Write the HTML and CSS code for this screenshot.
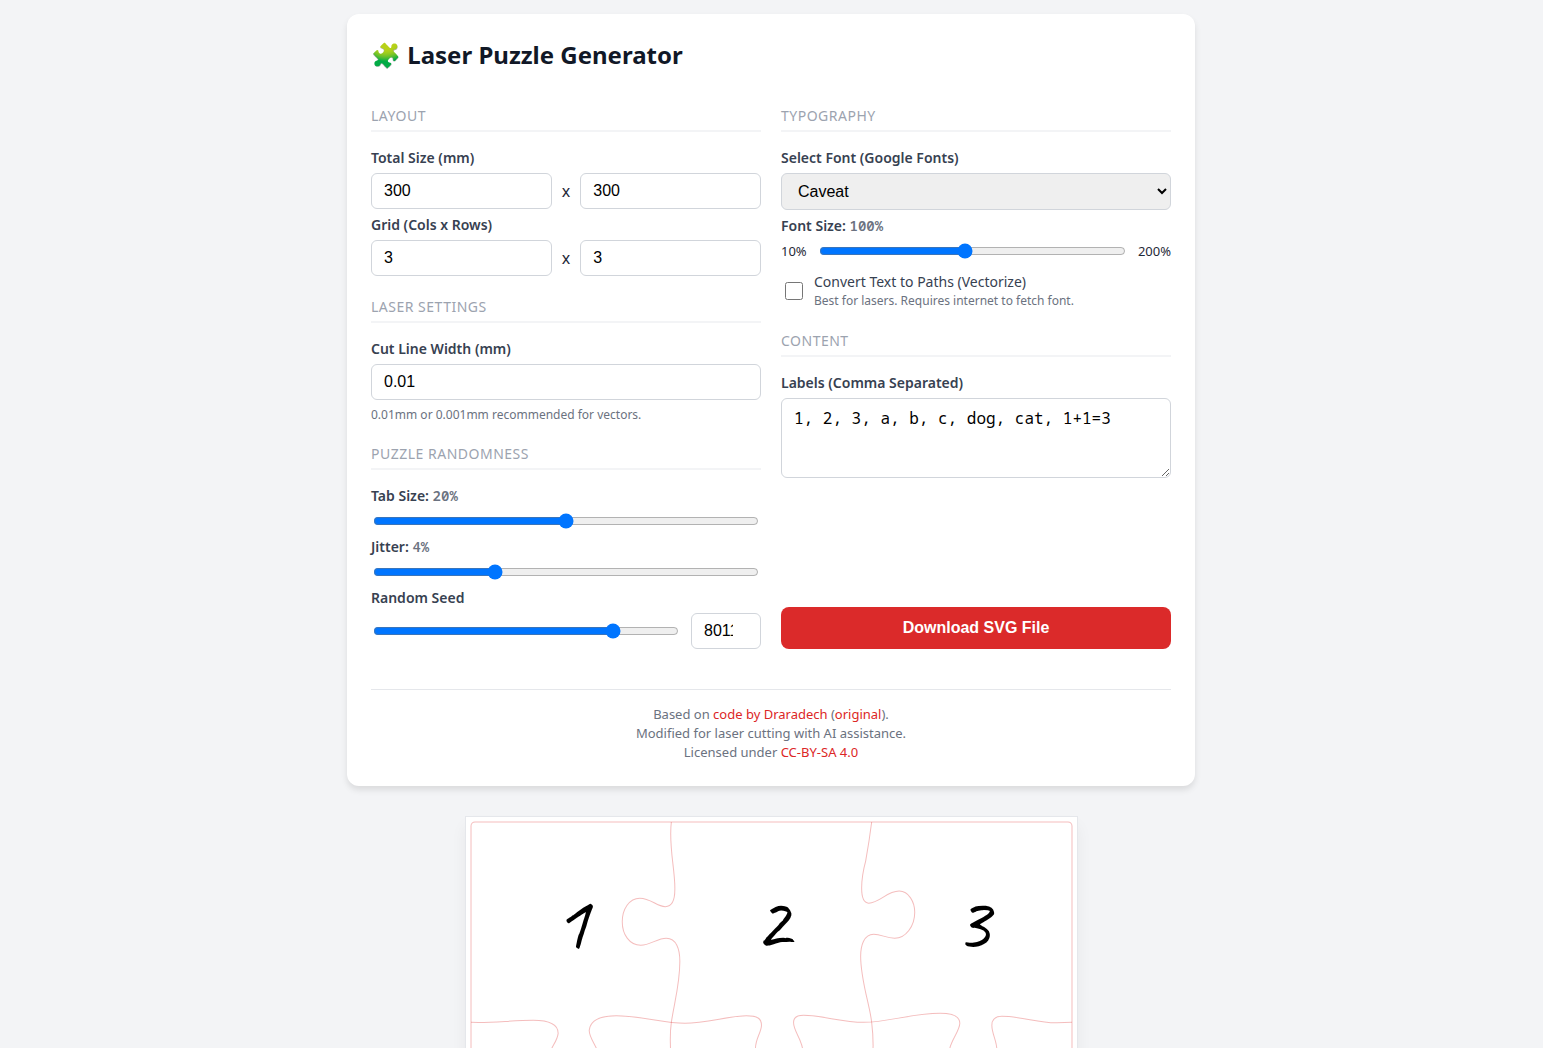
FILE: index.html
```html
<!DOCTYPE html>
<html lang="en">

<head>
  <meta charset="UTF-8" />
  <meta name="viewport" content="width=device-width, initial-scale=1.0" />
  <title>Laser Puzzle Generator</title>
  <link rel="stylesheet" href="styles.css">
</head>

<body>
  <main class="card">
    <h1>🧩 Laser Puzzle Generator</h1>

    <div class="columns">
      <div class="column">
        <section>
          <h2>Layout</h2>
          <label for="width">Total Size (mm)</label>
          <div class="row">
            <input type="number" id="width" value="300">
            <span>x</span>
            <input type="number" id="height" value="300" aria-label="Height (mm)">
          </div>
          <label for="cols">Grid (Cols x Rows)</label>
          <div class="row">
            <input type="number" id="cols" value="3">
            <span>x</span>
            <input type="number" id="rows" value="3" aria-label="Rows">
          </div>
        </section>

        <section>
          <h2>Laser Settings</h2>
          <label for="stroke">Cut Line Width (mm)</label>
          <input type="number" id="stroke" value="0.01" step="0.001">
          <p class="hint">0.01mm or 0.001mm recommended for vectors.</p>
        </section>

        <section>
          <h2>Puzzle Randomness</h2>
          <label for="tab">Tab Size: <span class="value">20%</span></label>
          <input type="range" id="tab" min="10" max="30" value="20">
          <label for="jitter">Jitter: <span class="value">4%</span></label>
          <input type="range" id="jitter" min="0" max="13" value="4">
          <label for="seed">Random Seed</label>
          <div class="row">
            <input type="range" id="seed" min="0" max="10000" value="8011">
            <input type="number" class="seed-number" value="8011" aria-label="Random seed value">
          </div>
        </section>
      </div>

      <div class="column">
        <section>
          <h2>Typography</h2>
          <label for="font">Select Font (Google Fonts)</label>
          <select id="font">
            <option>Caveat</option>
            <option>Roboto</option>
            <option>Open Sans</option>
          </select>
          <label for="fontSize">Font Size: <span class="value">100%</span></label>
          <div class="row range-row">
            <span>10%</span>
            <input type="range" id="fontSize" min="10" max="200" value="100">
            <span>200%</span>
          </div>
          <div class="check-row">
            <input type="checkbox" id="vectorize">
            <label for="vectorize">
              Convert Text to Paths (Vectorize)
              <small>Best for lasers. Requires internet to fetch font.</small>
            </label>
          </div>
        </section>

        <section>
          <h2>Content</h2>
          <label for="labels">Labels (Comma Separated)</label>
          <textarea id="labels">1, 2, 3, a, b, c, dog, cat, 1+1=3</textarea>
        </section>

        <button type="button" class="download">Download SVG File</button>
      </div>
    </div>

    <footer>
      Based on <a href="#">code by Draradech</a> (<a href="#">original</a>).<br>
      Modified for laser cutting with AI assistance.<br>
      Licensed under <a href="#">CC-BY-SA 4.0</a>
    </footer>
  </main>

  <div class="preview">
    <svg viewBox="-5 -5 610 610" role="img" aria-label="Puzzle preview">
      <g class="cuts">
        <rect x="0" y="0" width="600" height="600" rx="4" />

        <!-- vertical cuts -->
        <path d="M200 0 C197 24 204 48 203.5 67.5 C203.5 80 200 84.5 194 84.5 C185 84.5 180 76 168.5 76 C158 76 151 87 151 99.5 C151 112 158 123 169.5 123 C179 123 186 116 195 116 C205 116 208.5 127 208.5 139 C208.5 162 203 180 200 200 C198 214 199 228 200 240 C202 262 205 278 190 279 C178 278 174 272 165 276 C146 285 150 318 168 323 C180 326 185 316 196 317 C215 324 203 368 200 400 C198 430 205 470 200 482 C190 490 178 473 164 476 C148 482 148 518 166 523 C178 526 184 514 197 518 C212 528 203 568 200 600" />
        <path d="M400 0 C398 16 396 28 394 39 C391 50 390 58 390 66 C390 76 392 81 397 81 C408 81 415 69 427.5 69 C437 69 443 80 443 90 C443 104 434 116 423 116 C414 116 410 112 402 112 C392 112 389 124 389 134 C389 158 398 182 400 200 C402 216 402 230 400 246 C397 266 395 279 405 281 C417 281 422 271 434 274 C452 282 450 315 434 322 C422 326 414 315 403 317 C388 326 399 370 400 400 C402 440 394 478 404 481 C416 482 422 472 434 475 C450 483 450 516 434 522 C422 526 414 516 403 518 C388 526 398 570 400 600" />

        <!-- horizontal cuts -->
        <path d="M0 200 C20 201 40 198 62 198 C79 198 87 202 87 211 C86 220 79 225 78 234 C76 260 126 262 128 238 C129 226 118 218 118 208 C119 199 128 193.500 145 193.500 C170 193.500 192 201 213.500 201 C235 201 258 193.500 275 193.500 C286 193.500 290 196 290 203 C290 210 284 216 284 226 C284 258 333 258 332 232 C331 216 322 210 322 200 C322 195 325 193 332 193 C351 193 370 200 392 200 C416 200 440 191 468.500 191 C483 191 488 195 488 201 C488 208 480 217 478 226 C474 256 526 258 525 228 C525 218 520 212 520 203 C520 197 524 194 530 194 C550 194 567 201 585 200.500 L600 200" />
        <path d="M0 400 C40 402 82 388 86 404 C86 416 76 422 77 436 C82 458 122 456 125 434 C124 420 112 414 117 403 C130 390 170 400 200 400 C240 402 284 388 288 404 C287 416 278 422 278 436 C284 458 324 456 326 434 C325 420 314 414 319 403 C330 390 370 400 400 400 C440 402 484 388 487 404 C487 416 477 422 478 436 C484 458 524 456 526 434 C525 420 514 414 519 403 C530 390 570 400 600 400" />
      </g>
      <g class="piece-labels">
        <text x="100" y="126">1</text>
        <text x="300" y="126">2</text>
        <text x="500" y="126">3</text>
        <text x="100" y="326">a</text>
        <text x="300" y="326">b</text>
        <text x="500" y="326">c</text>
        <text x="100" y="526">dog</text>
        <text x="300" y="526">cat</text>
        <text x="500" y="526">1+1=3</text>
      </g>
    </svg>
  </div>
</body>

</html>
```
FILE: styles.css
```css
:root {
  --bg: #f3f4f6;
  --text: #1f2937;
  --label: #374151;
  --muted: #6b7280;
  --heading: #9ca3af;
  --border: #d1d5db;
  --accent: #dc2626;
}

* {
  box-sizing: border-box;
}

body {
  font-family: "Noto Sans", sans-serif;
  background: var(--bg);
  color: var(--text);
  margin: 0;
  padding: 14px 15px 14px 14px;
  display: flex;
  flex-direction: column;
  align-items: center;
  gap: 30px;
}

.card {
  width: 100%;
  max-width: 848px;
  background: #fff;
  padding: 24px;
  border-radius: 12px;
  box-shadow: 0 4px 6px rgba(0, 0, 0, 0.1);
}

h1 {
  margin: 0 0 35px;
  font-size: 24px;
  line-height: 33px;
  color: #111827;
}

.columns {
  display: grid;
  grid-template-columns: 1fr 1fr;
  gap: 20px;
}

.column {
  display: flex;
  flex-direction: column;
  gap: 21px;
}

h2 {
  margin: 0 0 16px;
  padding-bottom: 5px;
  border-bottom: 2px solid var(--bg);
  font-size: 14px;
  font-weight: 400;
  line-height: 19px;
  letter-spacing: 0.5px;
  text-transform: uppercase;
  color: var(--heading);
}

label {
  display: block;
  margin: 6px 0 5px;
  font-size: 14px;
  font-weight: 600;
  line-height: 20px;
  color: var(--label);
}

.value {
  font-family: "Noto Sans Mono", monospace;
  color: var(--muted);
}

input[type="number"],
select,
textarea {
  display: block;
  width: 100%;
  min-width: 0;
  padding: 8px 12px;
  border: 1px solid var(--border);
  border-radius: 6px;
  font-family: "Liberation Sans", sans-serif;
  font-size: 16px;
}

input[type="number"] {
  height: 36px;
}

select {
  height: 37px;
}

textarea {
  height: 80px;
  font-family: "Noto Sans Mono", monospace;
  resize: vertical;
}

input[type="range"] {
  display: block;
  width: calc(100% - 4px);
  height: 16px;
  margin: 7px 2px 8px;
}

.row {
  display: flex;
  align-items: center;
  gap: 10px;
}

.row input[type="range"] {
  flex: 1;
  min-width: 0;
  margin: 0 2px;
}

.row .seed-number {
  width: 70px;
}

.range-row {
  height: 20px;
  font-size: 13px;
}

.hint {
  margin: 6px 0 0;
  font-size: 12px;
  line-height: 17px;
  color: var(--muted);
}

.check-row {
  display: flex;
  align-items: center;
  gap: 8px;
  margin-top: 11px;
}

.check-row input {
  width: 18px;
  height: 18px;
}

.check-row label {
  margin: 0;
  font-weight: 400;
}

.check-row small {
  display: block;
  font-size: 12px;
  line-height: 18px;
  color: var(--muted);
}

h2 + label {
  margin-top: 0;
}

.download {
  margin-top: auto;
  height: 42px;
  border: none;
  border-radius: 8px;
  background: #db2a2a;
  color: #fff;
  font-family: "Liberation Sans", sans-serif;
  font-size: 16px;
  font-weight: 700;
  cursor: pointer;
}

.download:hover {
  background: #b91c1c;
}

footer {
  margin-top: 40px;
  padding-top: 15px;
  border-top: 1px solid #e5e7eb;
  font-size: 13px;
  line-height: 19px;
  text-align: center;
  color: var(--muted);
}

footer a {
  color: var(--accent);
  text-decoration: none;
}

.preview {
  width: 100%;
  max-width: 613px;
  background: #fff;
  border: 1px solid #e5e7eb;
  box-shadow: 0 10px 15px rgba(0, 0, 0, 0.05);
}

.preview svg {
  display: block;
  width: 100%;
}

.cuts {
  fill: none;
  stroke: var(--accent);
  stroke-opacity: 0.3;
}

.piece-labels {
  font-family: Caveat, cursive;
  font-size: 80px;
  text-anchor: middle;
}

@media (max-width: 640px) {
  .columns {
    grid-template-columns: 1fr;
  }
}
```
